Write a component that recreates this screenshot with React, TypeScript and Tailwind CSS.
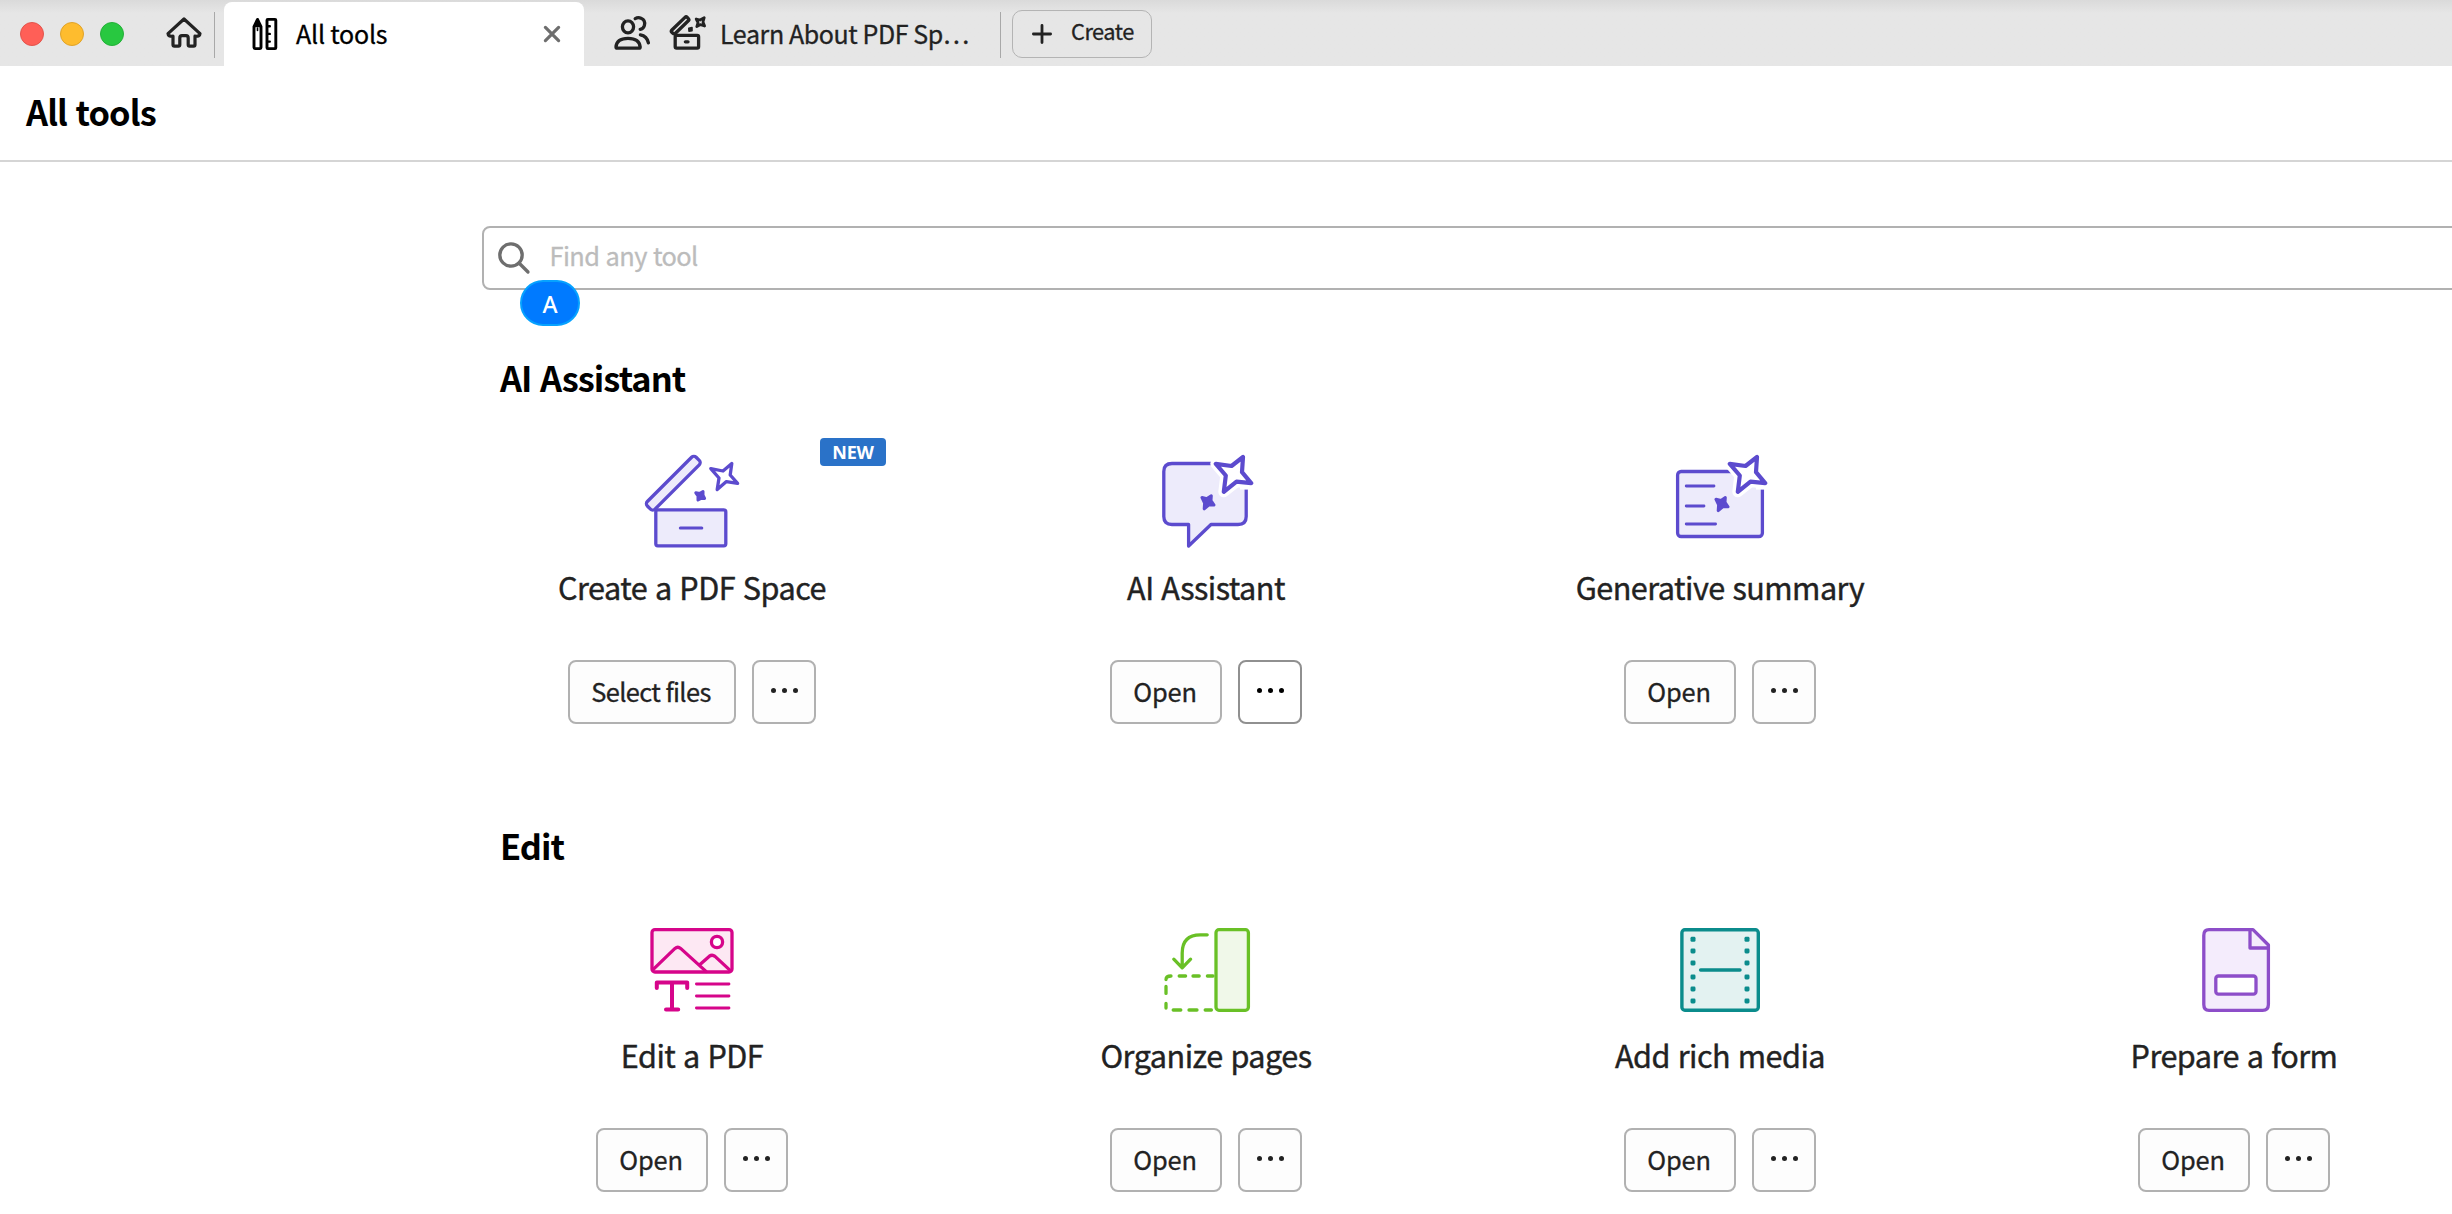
import React from "react";

const STAR = "M57.8 9.8 L73.5 12 L85 3 L84 18.2 L93.2 29.2 L78.5 27.6 L65.8 37.8 L67.8 21.5 Z";
const SPARK = "M44 43.5 L49 44.6 L53.3 41.8 L53 46.5 L56 51 L51 50.8 L46.2 54.8 L46.6 49 Z";

function PdfSpaceIcon() {
  return (
    <svg width="96" height="96" viewBox="0 0 96 96" fill="none" stroke="#5c4bce" strokeWidth="3.3" strokeLinecap="round" strokeLinejoin="round">
      <rect x="11.8" y="55.8" width="70" height="36" rx="2" fill="#edebfb" />
      <rect x="-5.2" y="23.8" width="69" height="10.8" rx="3.2" fill="#edebfb" transform="rotate(-45 29.3 29.2)" />
      <path d="M36.3 74 H57.8" strokeWidth="3" />
      <path d="M66.8 14.6 L79 17 L87.8 9.6 L86.2 21 L93.6 29.4 L82.4 27.6 L73.2 35.6 L75 24 Z" />
      <path d="M51.8 38.8 L56 39.4 L59 37.6 L59 41.2 L60.6 44.4 L57 44.4 L54 46 L54 42 Z" fill="#5c4bce" strokeWidth="3" />
    </svg>
  );
}

function AssistantIcon() {
  return (
    <svg width="96" height="96" viewBox="0 0 96 96" fill="none" stroke="#5c4bce" strokeWidth="3.3" strokeLinecap="round" strokeLinejoin="round">
      <path d="M14 9.5 H80 Q88.2 9.5 88.2 17.5 V62.5 Q88.2 70.5 80 70.5 H53 L30.6 92 V70.5 H14 Q5.8 70.5 5.8 62.5 V17.5 Q5.8 9.5 14 9.5 Z" fill="#edebfb" />
      <path d={STAR} fill="#fff" stroke="#fff" strokeWidth="11" />
      <path d="M82 -2 H96 V35.6 H82 Z" fill="#fff" stroke="none" />
      <path d={STAR} fill="#fff" strokeWidth="4.2" />
      <path d={SPARK} fill="#5c4bce" strokeWidth="3" />
    </svg>
  );
}

function SummaryIcon() {
  return (
    <svg width="96" height="96" viewBox="0 0 96 96" fill="none" stroke="#5c4bce" strokeWidth="3.3" strokeLinecap="round" strokeLinejoin="round">
      <rect x="5.6" y="17.5" width="84.8" height="65" rx="3.5" fill="#edebfb" />
      <path d="M14.2 32 H42 M14.2 52 H32 M14.2 70 H43.6" strokeWidth="2.8" />
      <path d={STAR} fill="#fff" stroke="#fff" strokeWidth="11" />
      <path d="M84 8 H96 V35.6 H84 Z" fill="#fff" stroke="none" />
      <path d={STAR} fill="#fff" strokeWidth="4.2" />
      <path d={SPARK} fill="#5c4bce" strokeWidth="3" transform="translate(0 1.8)" />
    </svg>
  );
}

function EditIcon() {
  return (
    <svg width="96" height="96" viewBox="0 0 96 96" fill="none" stroke="#d6058a" strokeWidth="3.3" strokeLinecap="round" strokeLinejoin="round">
      <rect x="8" y="7.6" width="80" height="42.4" rx="3" fill="#fde8f3" />
      <circle cx="73" cy="20" r="5.6" fill="#fff" />
      <path d="M9 47.6 L31 26.4 Q33.8 24 36.6 26.4 L62 49.4 M56 42.6 L65.4 34.2 Q68.2 32.2 71 34.4 L86.4 48.6" />
      <path d="M12.8 66 V60.4 H43.2 V66 M28 60.4 V87.4 M22 87.4 H34.2" strokeWidth="4" />
      <path d="M52.4 62 H85 M52.4 74 H85 M52.4 86 H85" strokeWidth="2.8" />
    </svg>
  );
}

function OrganizeIcon() {
  return (
    <svg width="96" height="96" viewBox="0 0 96 96" fill="none" stroke="#69c026" strokeWidth="3.3" strokeLinecap="round" strokeLinejoin="round">
      <rect x="58" y="7.7" width="32.4" height="80.6" rx="3" fill="#f0f8e9" />
      <path d="M49.2 12.8 H42.4 Q24.2 12.8 24.2 31 V45.6 M15.8 37.2 L24.2 45.8 L32.6 37.2" />
      <path d="M8 57.6 Q8 54 13 54 M21.2 54 H27.6 M35 54 H41.2 M49.4 54 H55 M8 64.4 V71.4 M8 81.4 V86 M15.2 88 H22.8 M31 88 H39 M47.2 88 H53.4" />
    </svg>
  );
}

function MediaIcon() {
  const rows = [17.3, 29, 41, 55, 67, 79];
  return (
    <svg width="96" height="96" viewBox="0 0 96 96" fill="none" stroke="#0b8c8c" strokeWidth="3.4" strokeLinecap="round" strokeLinejoin="round">
      <rect x="9.9" y="7.7" width="76.4" height="80.6" rx="3" fill="#e3f2f1" />
      <path d="M28.6 48 H68" />
      {rows.map((y) => (
        <g key={y} fill="#0b8c8c" stroke="none">
          <rect x="18.5" y={y - 2.5} width="5" height="5" rx="1.4" />
          <rect x="72.5" y={y - 2.5} width="5" height="5" rx="1.4" />
        </g>
      ))}
    </svg>
  );
}

function FormIcon() {
  return (
    <svg width="96" height="96" viewBox="0 0 96 96" fill="none" stroke="#8d4ec9" strokeWidth="3.3" strokeLinecap="round" strokeLinejoin="round">
      <path d="M23 7.6 H67 L82.4 23 V82.5 Q82.4 88.4 76.6 88.4 H23 Q17.8 88.4 17.8 82.5 V13.4 Q17.8 7.6 23 7.6 Z" fill="#f4ecfc" />
      <path d="M64 8 V26 H82" />
      <rect x="29.8" y="54" width="40.2" height="18.2" rx="2.6" fill="#fff" />
    </svg>
  );
}

type Tool = { title: string; action: string; icon: React.ReactNode; isNew?: boolean; active?: boolean };

const assistantTools: Tool[] = [
  { title: "Create a PDF Space", action: "Select files", icon: <PdfSpaceIcon />, isNew: true },
  { title: "AI Assistant", action: "Open", icon: <AssistantIcon />, active: true },
  { title: "Generative summary", action: "Open", icon: <SummaryIcon /> },
];

const editTools: Tool[] = [
  { title: "Edit a PDF", action: "Open", icon: <EditIcon /> },
  { title: "Organize pages", action: "Open", icon: <OrganizeIcon /> },
  { title: "Add rich media", action: "Open", icon: <MediaIcon /> },
  { title: "Prepare a form", action: "Open", icon: <FormIcon /> },
];

function ToolCard({ tool }: { tool: Tool }) {
  return (
    <article className="relative flex w-[514px] shrink-0 flex-col items-center">
      {tool.isNew && (
        <span className="absolute top-[-16px] left-[385px] flex h-7 w-[66px] items-center justify-center rounded-[4px] bg-[#2a72c8] font-['Noto_Sans'] text-[18px] leading-none font-bold tracking-[-0.2px] text-white">
          NEW
        </span>
      )}
      {tool.icon}
      <h3 className="mt-[17px] h-10 text-[30.6px] leading-10 tracking-[-0.52px] whitespace-nowrap text-[#222] [-webkit-text-stroke:0.4px_#222] [word-spacing:1.4px]">
        {tool.title}
      </h3>
      <div className="mt-[53px] flex gap-4">
        <button
          className={`flex h-16 items-center justify-center rounded-lg border-2 border-[#b1b1b1] bg-[#fdfdfd] text-[25.4px] leading-none whitespace-nowrap text-[#222] [-webkit-text-stroke:0.3px_#222] ${tool.action === "Open" ? "w-28 pr-0.5 tracking-[-0.2px]" : "w-[168px] pr-0.5 tracking-[-0.62px]"}`}
        >
          {tool.action}
        </button>
        <button
          aria-label="More"
          className={`flex size-16 items-center justify-center gap-1.5 rounded-lg border-2 pb-[3px] ${tool.active ? "border-[#909090] bg-white text-black" : "border-[#b1b1b1] bg-[#fdfdfd] text-[#222]"}`}
        >
          <i className="size-[5px] rounded-full bg-current" />
          <i className="size-[5px] rounded-full bg-current" />
          <i className="size-[5px] rounded-full bg-current" />
        </button>
      </div>
    </article>
  );
}

function Section({ title, tools }: { title: string; tools: Tool[] }) {
  return (
    <section className="h-[468px]">
      <h2 className="ml-[500px] h-12 text-[34.4px] leading-[48px] font-bold tracking-[-0.95px] text-black [word-spacing:1.6px]">{title}</h2>
      <div className="mt-[53px] ml-[435px] flex">
        {tools.map((t) => (
          <ToolCard key={t.title} tool={t} />
        ))}
      </div>
    </section>
  );
}

function TabBar() {
  return (
    <nav className="flex h-[66px] bg-linear-to-b from-[#dadada] to-[#e6e6e6] to-20% text-[25px] whitespace-nowrap text-[#222]">
      <div className="flex items-center gap-4 pt-0.5 pl-5">
        <i className="size-6 rounded-full border border-[#e2544c] bg-[#ff5f57]" />
        <i className="size-6 rounded-full border border-[#e0a329] bg-[#febc2e]" />
        <i className="size-6 rounded-full border border-[#24b038] bg-[#28c840]" />
      </div>
      <svg className="mt-3.5 ml-10" width="40" height="38" viewBox="0 0 40 38" fill="none" stroke="#222" strokeWidth="3.2" strokeLinejoin="round" strokeLinecap="round">
        <path d="M20 5 L36 19.6 Q36 22.6 31 22.2 V30.8 Q31 32.2 29.6 32.2 H25.6 Q24.2 32.2 24.2 30.8 V24 Q24.2 21.6 22 21.6 H18 Q15.8 21.6 15.8 24 V30.8 Q15.8 32.2 14.4 32.2 H10.4 Q9 32.2 9 30.8 V22.2 Q4 22.6 4 19.6 Z" />
      </svg>
      <div className="mt-3 ml-[10px] h-[46px] w-px bg-[#a8a8a8]" />
      <div className="mt-0.5 ml-[9px] flex h-16 w-[360px] items-center rounded-t-lg bg-white text-black">
        <svg className="ml-[27px]" width="28" height="36" viewBox="0 0 28 36" fill="none" stroke="#000" strokeWidth="2.9" strokeLinejoin="round" strokeLinecap="round">
          <path d="M3 10.6 L6.5 3.4 L10 10.6 V31.6 Q10 32.6 9 32.6 H4 Q3 32.6 3 31.6 Z" />
          <path d="M3.4 10.4 L6.5 4 L9.6 10.4 Z" fill="#000" strokeWidth="1.6" />
          <path d="M6.5 12 V14.5" strokeWidth="1.6" />
          <rect x="16" y="3.4" width="8.8" height="29.2" rx="0.8" />
          <path d="M16.6 10.2 H18.8 M16.6 17.9 H18.8 M16.6 25.6 H18.8" strokeWidth="2.4" />
        </svg>
        <span className="ml-[17px] pb-px leading-none tracking-[-0.2px] [-webkit-text-stroke:0.3px_#000]">All tools</span>
        <svg className="mr-[22px] ml-auto" width="20" height="20" viewBox="0 0 20 20" stroke="#6e6e6e" strokeWidth="3.2" strokeLinecap="round">
          <path d="M3.4 3.4 L16.6 16.6 M16.6 3.4 L3.4 16.6" />
        </svg>
      </div>
      <svg className="mt-3.5 ml-7" width="40" height="40" viewBox="0 0 40 40" fill="none" stroke="#222" strokeWidth="3.3" strokeLinecap="round" strokeLinejoin="round">
        <ellipse cx="16" cy="12.8" rx="5.6" ry="6" />
        <path d="M4 33 Q4.6 24.4 16 24.4 Q27.4 24.4 28.2 33 Q28.2 34.2 26.8 34.2 H5.4 Q4 34.2 4 33 Z" />
        <path d="M23.2 4.6 Q26 3 29 4.2 Q33.8 6.2 32.4 11.4 Q31.2 15 28.2 15.4 M28.4 20.8 Q35 22 36.4 28.8" />
      </svg>
      <svg className="mt-3.5 ml-4" width="40" height="40" viewBox="0 0 40 40" fill="none" stroke="#222" strokeWidth="3.3" strokeLinecap="round" strokeLinejoin="round">
        <rect x="7.2" y="21.4" width="23.4" height="12.8" rx="1.4" />
        <path d="M17.4 27.8 H20" />
        <rect x="1.4" y="9" width="21.4" height="4.8" rx="1.6" transform="rotate(-44 12.1 11.4)" />
        <path d="M28.2 5 L32 6 L36.2 3.6 L35 8 L36.6 12 L32.6 10.6 L28.8 12.6 L30 8.6 Z" strokeWidth="2.8" />
        <path d="M20.8 14.2 L24 13.6 L24 16.8 L21 17.2 Z" fill="#222" strokeWidth="1.6" />
      </svg>
      <span className="ml-[12px] w-[248px] pt-[21px] leading-none tracking-[-0.4px] [-webkit-text-stroke:0.3px_#222]">Learn About PDF Sp…</span>
      <div className="mt-3 ml-[32px] h-[46px] w-px bg-[#a8a8a8]" />
      <button className="mt-2.5 ml-[11px] flex h-12 w-[140px] items-center rounded-[10px] border border-[#b4b4b4] text-[21.8px] leading-none tracking-[-0.5px] [-webkit-text-stroke:0.3px_#222]">
        <svg className="mt-[-1px] ml-[17px]" width="24" height="24" viewBox="0 0 24 24" stroke="#222" strokeWidth="2.8" strokeLinecap="round">
          <path d="M3.4 12 H20.6 M12 3.4 V20.6" />
        </svg>
        <span className="ml-[17px] pb-[7px]">Create</span>
      </button>
    </nav>
  );
}

export default function App() {
  return (
    <div className="h-[1214px] w-full overflow-hidden bg-white font-['Noto_Sans_CJK_SC','Noto_Sans',sans-serif]">
      <TabBar />
      <header className="flex h-24 items-center border-b-2 border-[#d5d5d5] pb-1 pl-[26px]">
        <h1 className="text-[34.4px] leading-none font-bold tracking-[-0.9px] text-black [word-spacing:1.6px]">All tools</h1>
      </header>
      <div className="relative mt-16 mr-[-20px] ml-[482px] flex h-16 items-center rounded-lg border-2 border-[#b1b1b1]">
        <svg className="ml-3" width="36" height="36" viewBox="0 0 36 36" fill="none" stroke="#6e6e6e" strokeWidth="3.3" strokeLinecap="round">
          <circle cx="15" cy="15" r="11.2" />
          <path d="M23 23 L32 32" />
        </svg>
        <span className="ml-[17.5px] pb-[5px] text-[25.4px] leading-none tracking-[-0.58px] text-[#bcbcbc] [-webkit-text-stroke:0.3px_#bcbcbc] [word-spacing:1px]">
          Find any tool
        </span>
        <span className="absolute top-[52px] left-9 flex h-[46px] w-[60px] items-center justify-center rounded-full border-2 border-[#06a2ff] bg-[#007aff] pt-0.5 font-['Noto_Sans'] text-[23px] leading-none font-medium text-white">
          A
        </span>
      </div>
      <div className="mt-[63px]">
        <Section title="AI Assistant" tools={assistantTools} />
        <Section title="Edit" tools={editTools} />
      </div>
    </div>
  );
}
